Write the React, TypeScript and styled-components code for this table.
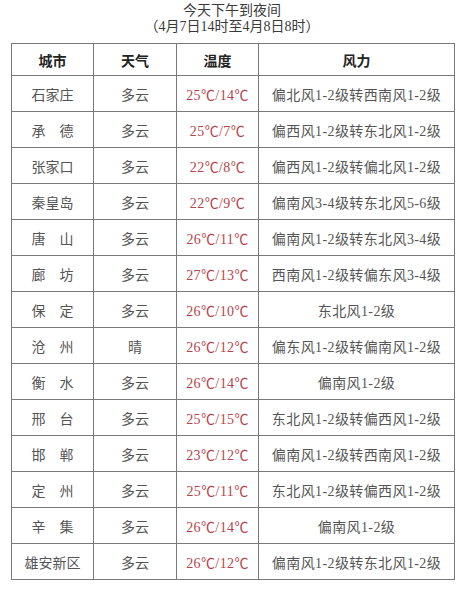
import React from "react";
import styled, { createGlobalStyle } from "styled-components";

const GlobalStyle = createGlobalStyle`
  html, body {
    margin: 0;
    padding: 0;
    background: #fff;
  }
  body {
    font-family: "Liberation Serif", "Noto Sans CJK SC", serif;
  }
`;

type Row = {
  city: string;
  weather: string;
  temp: string;
  wind: string;
};

const rows: Row[] = [
  { city: "石家庄", weather: "多云", temp: "25℃/14℃", wind: "偏北风1-2级转西南风1-2级" },
  { city: "承　德", weather: "多云", temp: "25℃/7℃", wind: "偏西风1-2级转东北风1-2级" },
  { city: "张家口", weather: "多云", temp: "22℃/8℃", wind: "偏西风1-2级转偏北风1-2级" },
  { city: "秦皇岛", weather: "多云", temp: "22℃/9℃", wind: "偏南风3-4级转东北风5-6级" },
  { city: "唐　山", weather: "多云", temp: "26℃/11℃", wind: "偏南风1-2级转东北风3-4级" },
  { city: "廊　坊", weather: "多云", temp: "27℃/13℃", wind: "西南风1-2级转偏东风3-4级" },
  { city: "保　定", weather: "多云", temp: "26℃/10℃", wind: "东北风1-2级" },
  { city: "沧　州", weather: "晴", temp: "26℃/12℃", wind: "偏东风1-2级转偏南风1-2级" },
  { city: "衡　水", weather: "多云", temp: "26℃/14℃", wind: "偏南风1-2级" },
  { city: "邢　台", weather: "多云", temp: "25℃/15℃", wind: "东北风1-2级转偏西风1-2级" },
  { city: "邯　郸", weather: "多云", temp: "23℃/12℃", wind: "偏南风1-2级转西南风1-2级" },
  { city: "定　州", weather: "多云", temp: "25℃/11℃", wind: "东北风1-2级转偏西风1-2级" },
  { city: "辛　集", weather: "多云", temp: "26℃/14℃", wind: "偏南风1-2级" },
  { city: "雄安新区", weather: "多云", temp: "26℃/12℃", wind: "偏南风1-2级转东北风1-2级" },
];

const Page = styled.div`
  width: 464px;
  height: 600px;
  padding-top: 3px;
  box-sizing: border-box;
`;

const Heading = styled.div`
  text-align: center;
  color: #3a3a3a;
  font-size: 14px;
  line-height: 16px;
`;

const Table = styled.table`
  margin: 8px 0 0 11px;
  width: 444px;
  border-collapse: collapse;
  table-layout: fixed;
  border: 1px solid #7a7a7a;
`;

const HeadCell = styled.th<{ $w?: number }>`
  width: ${(p) => (p.$w ? `${p.$w}px` : "auto")};
  height: 31px;
  padding: 0;
  border: 1px solid #7a7a7a;
  font-size: 14px;
  font-weight: 700;
  color: #222;
  text-align: center;
`;

const Cell = styled.td<{ $red?: boolean; $spaced?: boolean }>`
  height: 35px;
  padding: 0;
  border: 1px solid #7a7a7a;
  font-size: 14px;
  color: ${(p) => (p.$red ? "#b8444a" : "#555")};
  letter-spacing: ${(p) => (p.$spaced ? "0.4px" : "0")};
  text-align: center;
  white-space: nowrap;
`;

export default function App() {
  return (
    <Page>
      <GlobalStyle />
      <Heading>
        今天下午到夜间
        <br />
        （4月7日14时至4月8日8时）
      </Heading>
      <Table>
        <thead>
          <tr>
            <HeadCell $w={81}>城市</HeadCell>
            <HeadCell $w={82}>天气</HeadCell>
            <HeadCell $w={81}>温度</HeadCell>
            <HeadCell>风力</HeadCell>
          </tr>
        </thead>
        <tbody>
          {rows.map((r) => (
            <tr key={r.city}>
              <Cell>{r.city}</Cell>
              <Cell>{r.weather}</Cell>
              <Cell $red $spaced>{r.temp}</Cell>
              <Cell $spaced>{r.wind}</Cell>
            </tr>
          ))}
        </tbody>
      </Table>
    </Page>
  );
}
